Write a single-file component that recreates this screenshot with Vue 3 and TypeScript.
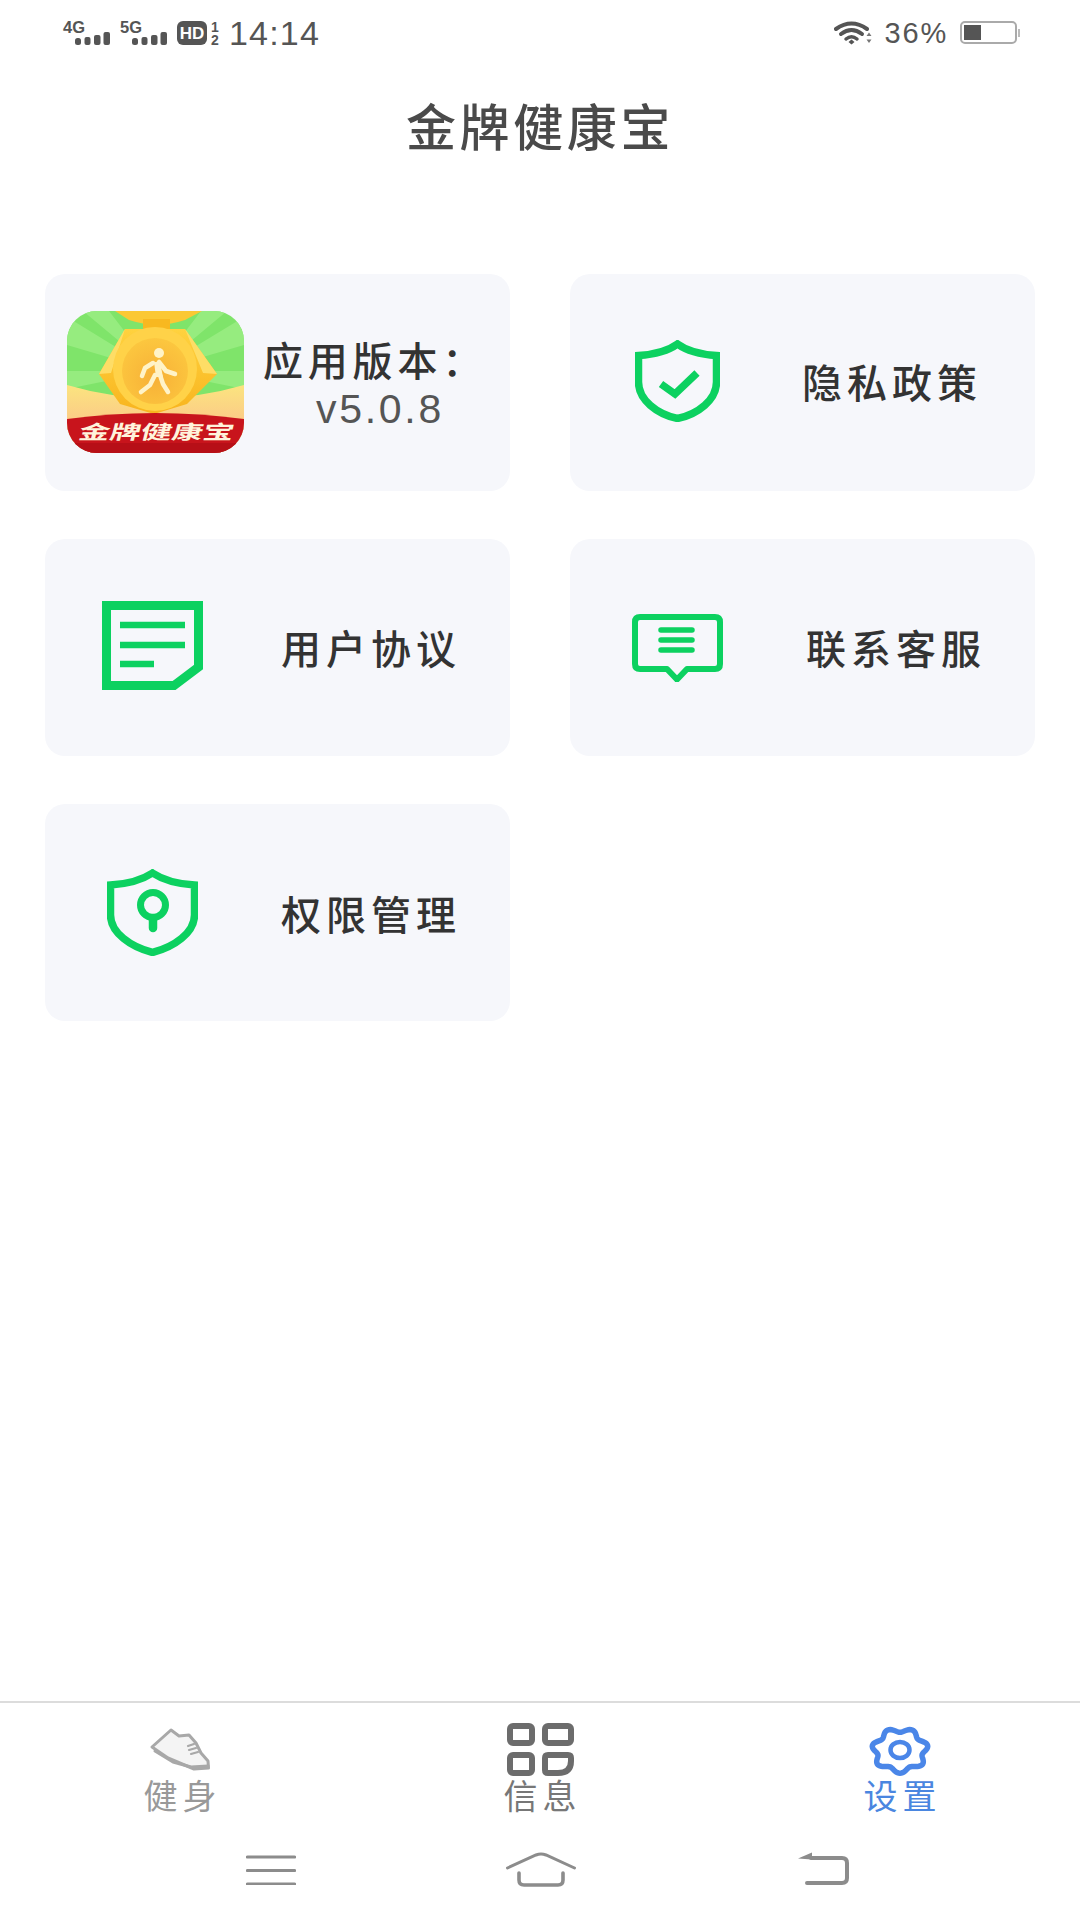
<script setup lang="ts">
import { computed } from 'vue'

const gearPath = computed(() => {
  const pts: string[] = []
  const n = 140
  for (let i = 0; i < n; i++) {
    const t = (i / n) * Math.PI * 2
    const wob = 1 + 0.11 * Math.cos(7 * (t - Math.PI / 2))
    const x = 29 + 25.5 * wob * Math.cos(t)
    const y = 23.5 + 20.5 * wob * Math.sin(t)
    pts.push(`${x.toFixed(2)} ${y.toFixed(2)}`)
  }
  return 'M' + pts.join('L') + 'Z'
})
</script>

<template>
  <div class="page">
    <header class="status">
      <svg class="sig" width="47" height="24" viewBox="0 0 47 24">
        <text x="0" y="12" class="sig-t">4G</text>
        <rect x="12" y="17" width="6" height="7" rx="2.5" /><rect x="21.5" y="16" width="6" height="8" rx="2" />
        <rect x="31" y="14" width="6.5" height="10" rx="2" /><rect x="40.5" y="11" width="6.5" height="13" rx="2" />
      </svg>
      <svg class="sig" width="47" height="24" viewBox="0 0 47 24">
        <text x="0" y="12" class="sig-t">5G</text>
        <rect x="12" y="17" width="6" height="7" rx="2.5" /><rect x="21.5" y="16" width="6" height="8" rx="2" />
        <rect x="31" y="14" width="6.5" height="10" rx="2" /><rect x="40.5" y="11" width="6.5" height="13" rx="2" />
      </svg>
      <svg class="sig" width="42" height="24" viewBox="0 0 42 24">
        <rect x="0" y="0" width="30" height="24" rx="6" fill="#555" />
        <text x="15" y="18" class="hd">HD</text>
        <text x="38" y="11" class="frac">1</text>
        <text x="38" y="24" class="frac">2</text>
      </svg>
      <span class="time">14:14</span>
      <span class="spacer"></span>
      <svg class="wifi" width="38" height="24" viewBox="0 0 38 24">
        <g fill="none" stroke="#555" stroke-linecap="round">
          <path d="M2 8 Q17.5 -3 33 8" stroke-width="4" />
          <path d="M7 13 Q17.5 5 28 13" stroke-width="4" />
          <path d="M12 18 Q17.5 13.5 23 18" stroke-width="3.5" />
        </g>
        <path d="M14.5 21 L17.5 18.5 L20.5 21 L17.5 23.5Z" fill="#555" />
        <path d="M32.5 15 L35 11.5 L37.5 15Z M32.5 18.5 L35 22 L37.5 18.5Z" fill="#777" />
      </svg>
      <span class="pct">36%</span>
      <div class="battery"><div class="battery-fill"></div></div>
      <div class="battery-nub"></div>
    </header>

    <h1 class="title">金牌健康宝</h1>

    <main class="grid">
      <section class="card card-app">
        <svg class="app-icon" width="177" height="142" viewBox="0 0 177 142">
          <defs>
            <clipPath id="appClip"><rect width="177" height="142" rx="30" /></clipPath>
            <linearGradient id="medalG" x1="0" y1="0" x2="0" y2="1">
              <stop offset="0" stop-color="#ffd23f" /><stop offset="1" stop-color="#f8b41e" />
            </linearGradient>
            <radialGradient id="coinG" cx="0.5" cy="0.6" r="0.6">
              <stop offset="0" stop-color="#f7b037" /><stop offset="1" stop-color="#fcc73f" />
            </radialGradient>
            <linearGradient id="peachG" x1="0" y1="0" x2="0" y2="1">
              <stop offset="0" stop-color="#fbe47f" /><stop offset="1" stop-color="#fcb58e" />
            </linearGradient>
          </defs>
          <g clip-path="url(#appClip)">
            <rect width="177" height="142" fill="#7fe46a" />
            <path d="M88 60 L0 6 V34Z M88 60 L42 0 H16Z M88 60 L177 6 V34Z M88 60 L134 0 H160Z M88 60 L0 60 V78Z M88 60 L177 60 V78Z" fill="#96ec7f" />
            <path d="M0 74 Q88 100 177 74 V142 H0Z" fill="url(#peachG)" />
            <path d="M48 0 H135 L118 9 Q90 18 62 9Z" fill="#fbc834" />
            <rect x="76" y="8" width="27" height="20" fill="#f8b820" />
            <path d="M58 18 H118 L150 63 L120 93 L87 103 L53 93 L32 63Z" fill="url(#medalG)" />
            <path d="M58 18 L32 63 L44 62Z M118 18 L150 63 L136 62Z" fill="#fedd66" />
            <circle cx="88" cy="58" r="42" fill="#ffd248" />
            <circle cx="88" cy="60" r="33" fill="url(#coinG)" />
            <circle cx="92" cy="42" r="5" fill="#fff3c8" />
            <path d="M87 51 L93 51 L96 66 L89 66Z" fill="#fff3c8" />
            <path d="M86 52 L78 57 L75 65 M92 51 L99 60 L108 63 M88 64 L83 74 L74 81 M93 64 L96 73 L101 81" fill="none" stroke="#fff3c8" stroke-width="4.5" stroke-linecap="round" stroke-linejoin="round" />
            <path d="M0 108 Q88 96 177 108 V142 H0Z" fill="#c8141c" />
            <path d="M0 132 H177 V142 H0Z" fill="#b70f17" />
            <text class="app-t" transform="translate(88 128) skewX(-14) scale(1 .62)" text-anchor="middle">金牌健康宝</text>
          </g>
        </svg>
        <div class="app-text">
          <div class="app-label">应用版本：</div>
          <div class="app-ver">v5.0.8</div>
        </div>
      </section>

      <section class="card">
        <div class="slot lift-2">
          <svg width="85" height="82" viewBox="0 0 85 82" fill="none" stroke="#0cd160">
            <path d="M42.5 4 C33 11 20 14.5 3.5 15.5 V42 C3.5 60 22 74 42.5 78.5 C63 74 81.5 60 81.5 42 V15.5 C65 14.5 52 11 42.5 4Z" stroke-width="7.5" />
            <path d="M26 44 L40 54 L62 33" stroke-width="7.5" />
          </svg>
        </div>
        <span class="label narrow">隐私政策</span>
      </section>

      <section class="card">
        <div class="slot lift-2">
          <svg width="101" height="89" viewBox="0 0 101 89" fill="none" stroke="#0cd160">
            <path d="M4.5 4.5 H96.5 V66 L72 84.5 H4.5Z" stroke-width="9" />
            <path d="M18 24 H83 M18 44 H83 M18 63 H52" stroke-width="6.5" />
          </svg>
        </div>
        <span class="label lift-1">用户协议</span>
      </section>

      <section class="card">
        <div class="slot">
          <svg width="91" height="68" viewBox="0 0 91 68" fill="none" stroke="#0cd160" stroke-linecap="round" stroke-linejoin="round">
            <path d="M8 3 H83 Q88 3 88 8 V50 Q88 55 83 55 H55 L45 65.5 L35 55 H8 Q3 55 3 50 V8 Q3 3 8 3Z" stroke-width="6" />
            <path d="M29 16 H60 M29 26 H60 M29 36 H60" stroke-width="5.5" />
          </svg>
        </div>
        <span class="label lift-1">联系客服</span>
      </section>

      <section class="card">
        <div class="slot">
          <svg width="91" height="87" viewBox="0 0 91 87" fill="none" stroke="#0cd160">
            <path d="M45.5 4 C35 11 20 15 3.5 16 V46 C3.5 64 24 78 45.5 83.5 C67 78 87.5 64 87.5 46 V16 C71 15 56 11 45.5 4Z" stroke-width="7.5" />
            <circle cx="46" cy="36" r="12.5" stroke-width="7" />
            <path d="M46 49 V59" stroke-width="8.5" stroke-linecap="round" />
          </svg>
        </div>
        <span class="label">权限管理</span>
      </section>
    </main>

    <footer class="footer">
      <nav class="tabs">
        <div class="tab">
          <svg class="tab-icon" width="60" height="53" viewBox="0 0 60 53" fill="none" stroke="#a8a8a8" stroke-linecap="round" stroke-linejoin="round">
            <g transform="translate(1 6)">
              <path d="M1 18 L20 1 L28 7 L38 6 L45 14 L50 24 L57 32 L57.5 39 L43 40 L17 29Z" fill="#f4f4f4" stroke-width="3" />
              <path d="M4 22 L22 33 L40 38 L57 37" stroke-width="3" />
              <path d="M37 17 L43 15 M38 21 L45 19 M40 25 L47 23" stroke-width="2.2" />
            </g>
          </svg>
          <span class="tab-label">健身</span>
        </div>
        <div class="tab">
          <svg class="tab-icon" width="67" height="53" viewBox="0 0 67 53" fill="none" stroke="#6c6c6c" stroke-width="6">
            <rect x="3" y="3" width="22" height="17" rx="3" />
            <rect x="38" y="3" width="26" height="17" rx="3" />
            <rect x="3" y="32" width="22" height="18" rx="3" />
            <path d="M41 32 H61 Q64 32 64 35 V38 Q64 50 51 50 H41 Q38 50 38 47 V35 Q38 32 41 32Z" />
          </svg>
          <span class="tab-label dark">信息</span>
        </div>
        <div class="tab">
          <svg class="tab-icon gear" width="58" height="53" viewBox="0 0 58 53" fill="none" stroke="#4a86e8">
            <g transform="translate(0 4)">
              <path :d="gearPath" stroke-width="5.5" />
              <ellipse cx="29" cy="23" rx="9.5" ry="8" stroke-width="4.5" />
            </g>
          </svg>
          <span class="tab-label blue">设置</span>
        </div>
      </nav>
      <div class="sysnav">
        <svg class="sys-menu" width="50" height="30" viewBox="0 0 50 30" fill="none" stroke="#8c8c8c" stroke-width="3.2" stroke-linecap="round">
          <path d="M1.5 2 H48.5 M1.5 15.5 H48.5 M1.5 29 H48.5" />
        </svg>
        <svg class="sys-home" width="70" height="35" viewBox="0 0 70 35" fill="none" stroke="#8c8c8c" stroke-linecap="round">
          <path d="M1.5 16 L30 3 Q35 1 40 3 L68.5 16" stroke-width="3" />
          <path d="M13 21 V28 Q13 33 18 33 H52 Q57 33 57 28 V21" stroke-width="3.6" />
        </svg>
        <svg class="sys-back" width="51" height="33" viewBox="0 0 51 33" fill="none" stroke="#8c8c8c">
          <path d="M0 6.5 L14 0.5 V7.5Z" fill="#8c8c8c" stroke="none" />
          <path d="M13 6 H44 Q49 6 49 11 V26 Q49 31 44 31 H9" stroke-width="4" stroke-linecap="round" />
        </svg>
      </div>
    </footer>
  </div>
</template>

<style scoped>
.page {
  width: 1080px;
  height: 1920px;
  display: flex;
  flex-direction: column;
  background: #fff;
  font-family: "Noto Sans CJK SC", "Noto Sans", sans-serif;
  overflow: hidden;
}
.status {
  height: 68px;
  box-sizing: border-box;
  padding: 21px 0 0 63px;
  display: flex;
  align-items: flex-start;
  color: #555;
}
.sig { margin-right: 10px; flex: none; display: block; overflow: visible; }
.sig rect { fill: #555; }
.sig-t { font: 700 16.5px "Liberation Sans", sans-serif; fill: #555; }
.hd { font: 700 17px "Liberation Sans", sans-serif; fill: #fff; text-anchor: middle; }
.frac { font: 700 14px "Liberation Sans", sans-serif; fill: #555; text-anchor: middle; }
.time {
  margin-left: 0;
  font: 400 34px/24px "Liberation Sans", sans-serif;
  letter-spacing: 1.2px;
  color: #555;
}
.spacer { flex: 1; }
.wifi { flex: none; }
.pct {
  margin-left: 13px;
  font: 400 29px/24px "Liberation Sans", sans-serif;
  letter-spacing: 1.8px;
  color: #555;
}
.battery {
  margin-left: 12px;
  width: 57px;
  height: 23px;
  box-sizing: border-box;
  border: 2.5px solid #aaa;
  border-radius: 5px;
  padding: 2px;
}
.battery-fill { width: 17px; height: 100%; background: #555; }
.battery-nub {
  width: 2px;
  height: 8px;
  margin: 8px 60px 0 1px;
  background: #bbb;
}
.title {
  margin: 0;
  height: 206px;
  padding-top: 23px;
  box-sizing: border-box;
  text-align: center;
  font-size: 50px;
  line-height: 66px;
  letter-spacing: 3.6px;
  font-weight: 500;
  color: #4a4a4a;
}
.grid {
  display: grid;
  grid-template-columns: 465px 465px;
  grid-auto-rows: 217px;
  column-gap: 60px;
  row-gap: 48px;
  padding-left: 45px;
}
.card {
  display: flex;
  align-items: center;
  background: #f6f7fb;
  border-radius: 20px;
}
.card-app { padding-left: 22px; }
.app-icon { flex: none; display: block; margin-top: -1px; }
.app-t { font: 700 31px "Noto Sans CJK SC", sans-serif; fill: #fff4dc; }
.app-text { margin-left: 19px; margin-top: 0; }
.app-label {
  font-size: 40px;
  line-height: 50px;
  letter-spacing: 4.8px;
  font-weight: 500;
  color: #333;
  white-space: nowrap;
}
.app-ver {
  margin-left: 53px;
  margin-top: 2px;
  font: 400 41px/46px "Liberation Sans", sans-serif;
  letter-spacing: 2.7px;
  color: #555;
}
.slot {
  width: 215px;
  flex: none;
  display: flex;
  justify-content: center;
}
.slot svg { display: block; }
.lift-2 { margin-top: -4px; }
.label {
  margin-left: 21px;
  font-size: 40px;
  line-height: 50px;
  letter-spacing: 5px;
  font-weight: 500;
  color: #333;
  white-space: nowrap;
}
.label.lift-1 { margin-top: -2px; }
.label.narrow { margin-left: 17px; margin-top: -4px; }
.footer {
  margin-top: auto;
  height: 219px;
  box-sizing: border-box;
  border-top: 2px solid #dcdcdc;
}
.tabs {
  display: grid;
  grid-template-columns: repeat(3, 360px);
  height: 131px;
  padding-top: 20px;
  box-sizing: border-box;
}
.tab {
  display: flex;
  flex-direction: column;
  align-items: center;
}
.tab-icon { display: block; flex: none; }
.tab-icon.gear { overflow: visible; }
.tab-label {
  margin-top: -1px;
  font-size: 34px;
  line-height: 40px;
  letter-spacing: 5px;
  margin-right: -5px;
  color: #999;
}
.tab-label.dark { color: #777; }
.tab-label.blue { color: #4a86e0; }
.sysnav {
  display: flex;
  align-items: flex-start;
  padding: 18px 0 0 246px;
}
.sysnav svg { display: block; flex: none; }
.sys-menu { margin-top: 3px; }
.sys-home { margin-left: 210px; }
.sys-back { margin-left: 222px; }
</style>

<style>
html, body { margin: 0; background: #fff; }
</style>
